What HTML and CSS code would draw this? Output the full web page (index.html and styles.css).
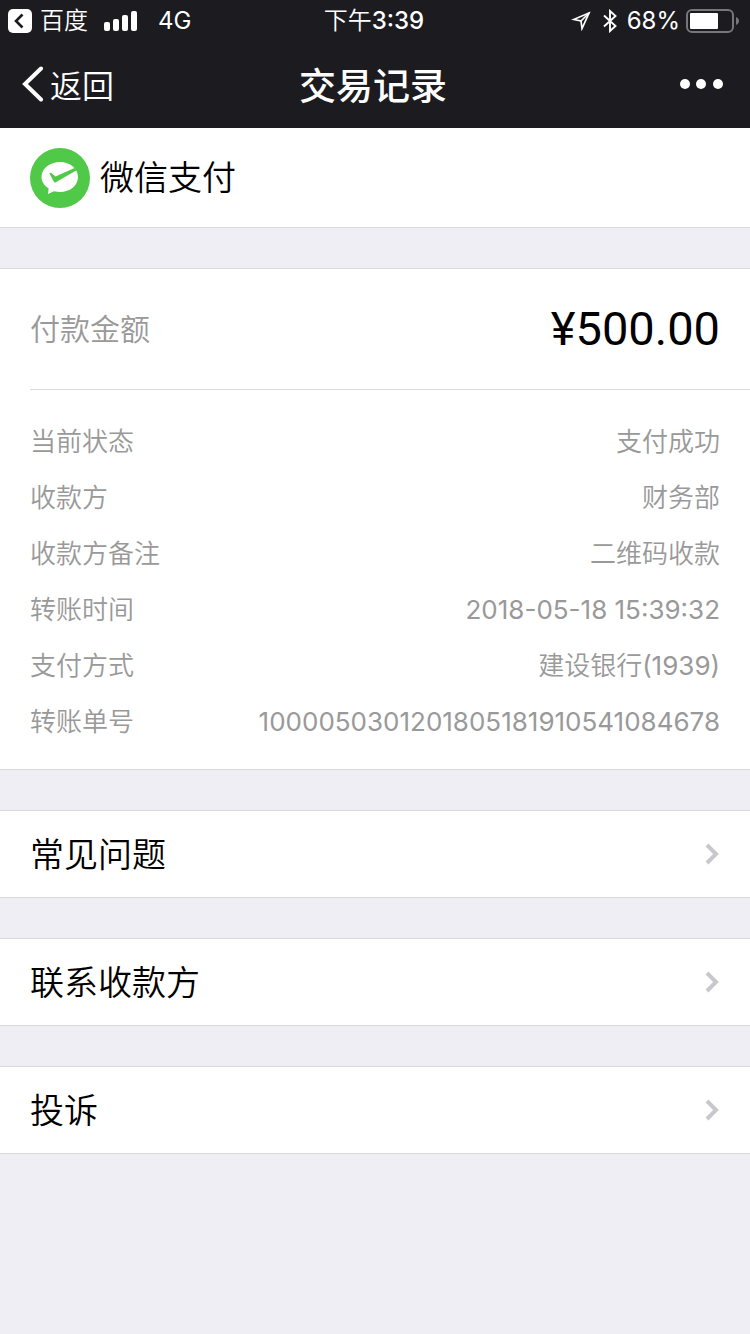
FILE: index.html
```html
<!DOCTYPE html>
<html lang="zh-CN">
<head>
    <meta charset="UTF-8">
    <meta name="viewport" content="width=device-width, initial-scale=1.0">
    <title>交易记录</title>
    <link rel="stylesheet" href="styles.css">
</head>
<body>

<!-- Top bar -->
<header class="topbar">
    <div class="status">
        <div class="status-left">
            <svg class="app-back" viewBox="0 0 24 24" aria-hidden="true">
                <rect width="24" height="24" rx="5" fill="#fff"/>
                <path d="M14.500 5.500L8 12l6.500 6.500" fill="none" stroke="#1c1b20" stroke-width="2.600"/>
            </svg>
            <span>百度</span>
            <svg class="signal" viewBox="0 0 34 20" aria-hidden="true">
                <rect x="0" y="11" width="6" height="9" rx="2"/>
                <rect x="9" y="8" width="6" height="12" rx="2"/>
                <rect x="18" y="4" width="6" height="16" rx="2"/>
                <rect x="27" y="0" width="6" height="20" rx="2"/>
            </svg>
            <span class="num">4G</span>
        </div>
        <div class="status-time">下午<span class="clock">3:39</span></div>
        <div class="status-right">
            <svg class="location" viewBox="0 0 20 20" aria-hidden="true">
                <path d="M18 2L2.500 8.500l7.500 1.500 1 7.500z" fill="none" stroke="#fff" stroke-width="1.700"/>
                <path d="M18 2L10 10" stroke="#fff" stroke-width="1.700"/>
            </svg>
            <svg class="bluetooth" viewBox="0 0 14 24" aria-hidden="true">
                <path d="M1 6.500l11.500 10.500L7 22V2l5.500 5L1 17.500" fill="none" stroke="#fff" stroke-width="1.900"/>
            </svg>
            <span class="num">68%</span>
            <svg class="battery" viewBox="0 0 54 24" aria-hidden="true">
                <rect x="1" y="1" width="46" height="22" rx="5" fill="none" stroke="#77767a" stroke-width="2"/>
                <rect x="4" y="4" width="28" height="16" rx="1" fill="#fff"/>
                <path d="M50 8c4 1.500 4 6.500 0 8z" fill="#77767a"/>
            </svg>
        </div>
    </div>
    <nav class="nav">
        <button type="button" class="back">
            <svg viewBox="0 0 22 36" aria-hidden="true">
                <path d="M19 2.500L3 18l16 15.500" fill="none" stroke="#fff" stroke-width="4" stroke-linecap="round"/>
            </svg>
            返回
        </button>
        <h1>交易记录</h1>
        <button type="button" class="more" aria-label="更多">
            <svg viewBox="0 0 44 10" aria-hidden="true">
                <circle cx="5" cy="5" r="5"/>
                <circle cx="21" cy="5" r="5"/>
                <circle cx="38" cy="5" r="5"/>
            </svg>
        </button>
    </nav>
</header>

<main>
    <section class="brand">
        <svg class="brand-logo" viewBox="0 0 60 60" aria-hidden="true">
            <circle cx="30" cy="30" r="30" fill="#50c848"/>
            <path d="M30 14c10 0 18 6.500 18 15s-8 15-18 15c-2 0-4-.3-6-.8l-6 2.800.6-5.600C14.500 37.800 11.500 33.700 11.500 29 11.500 20.500 20 14 30 14z" fill="#fff"/>
            <path d="M19.500 25.500q.5-1.200 1.800-.5L25.500 28.500 44.500 20 47 22 25.800 34.300q-1.300.6-1.900-.6z" fill="#50c848"/>
        </svg>
        <h2>微信支付</h2>
    </section>

    <!-- Payment details -->
    <section class="card">
        <div class="amount">
            <span class="amount-label">付款金额</span>
            <span class="amount-value">¥500.00</span>
        </div>
        <dl class="details">
            <div class="row"><dt>当前状态</dt><dd>支付成功</dd></div>
            <div class="row"><dt>收款方</dt><dd>财务部</dd></div>
            <div class="row"><dt>收款方备注</dt><dd>二维码收款</dd></div>
            <div class="row"><dt>转账时间</dt><dd class="num">2018-05-18 15:39:32</dd></div>
            <div class="row"><dt>支付方式</dt><dd>建设银行<span class="num">(1939)</span></dd></div>
            <div class="row"><dt>转账单号</dt><dd class="num">1000050301201805181910541084678</dd></div>
        </dl>
    </section>

    <a class="link" href="#faq">
        常见问题
        <svg class="arrow" viewBox="0 0 16 24" aria-hidden="true"><path d="M3 3l9 9-9 9"/></svg>
    </a>
    <a class="link" href="#contact">
        联系收款方
        <svg class="arrow" viewBox="0 0 16 24" aria-hidden="true"><path d="M3 3l9 9-9 9"/></svg>
    </a>
    <a class="link" href="#complaint">
        投诉
        <svg class="arrow" viewBox="0 0 16 24" aria-hidden="true"><path d="M3 3l9 9-9 9"/></svg>
    </a>
</main>

</body>
</html>
```
FILE: styles.css
```css
* {
    box-sizing: border-box;
}
body {
    font-family: Inter, "Noto Sans CJK SC", sans-serif;
    font-weight: 350;
    line-height: 1.5;
    margin: 0;
    background-color: #efeef4;
    color: #000;
}
h1, h2, dl, dd {
    margin: 0;
    font-weight: inherit;
}
svg {
    display: block;
    flex: none;
}
button {
    padding: 0;
    border: none;
    background: none;
    color: inherit;
    font: inherit;
    cursor: pointer;
}
.num {
    font-weight: 400;
}

/* Top bar */
.topbar {
    background-color: #1c1b20;
    color: #fff;
}
.status {
    display: grid;
    grid-template-columns: 1fr auto 1fr;
    align-items: center;
    height: 40px;
    padding: 2px 10px 0 8px;
    font-size: 24px;
}
.status-left, .status-right {
    display: flex;
    align-items: center;
    gap: 8px;
}
.status-right {
    justify-content: flex-end;
    gap: 6px;
}
.clock {
    font-weight: 500;
}
.app-back {
    width: 24px;
    height: 24px;
}
.signal {
    width: 34px;
    height: 20px;
    margin: 0 12px 0 8px;
    fill: #fff;
}
.location {
    width: 20px;
    height: 20px;
}
.bluetooth {
    width: 14px;
    height: 24px;
    margin: 0 4px 0 6px;
}
.battery {
    width: 54px;
    height: 24px;
}
.nav {
    display: grid;
    grid-template-columns: 1fr auto 1fr;
    align-items: center;
    height: 88px;
    padding: 0 26px 0 22px;
    line-height: normal;
}
.nav h1 {
    font-size: 37px;
    font-weight: 500;
}
.back {
    display: flex;
    align-items: center;
    gap: 6px;
    font-size: 32px;
    justify-self: start;
}
.back svg {
    width: 22px;
    height: 36px;
}
.more {
    justify-self: end;
}
.more svg {
    width: 44px;
    height: 10px;
    fill: #fff;
}

/* Sections */
.brand, .card, .link {
    background-color: #fff;
    border-bottom: 1px solid #d9d9dc;
}
.card, .link {
    margin-top: 40px;
    border-top: 1px solid #d9d9dc;
}
.brand {
    display: flex;
    align-items: center;
    gap: 10px;
    height: 100px;
    padding: 0 30px;
}
.brand-logo {
    width: 60px;
    height: 60px;
}
.brand h2 {
    font-size: 34px;
}
.card {
    padding-left: 30px;
}
.amount {
    display: flex;
    align-items: center;
    justify-content: space-between;
    height: 121px;
    padding-right: 30px;
    border-bottom: 1px solid #d9d9d9;
}
.amount-label {
    color: #999;
    font-size: 30px;
}
.amount-value {
    font-family: Roboto, sans-serif;
    font-size: 47px;
    font-weight: 400;
}
.details {
    padding: 24px 30px 19px 0;
    color: #999;
    font-size: 26px;
    line-height: 56px;
}
.row {
    display: flex;
    justify-content: space-between;
}
.link {
    display: flex;
    align-items: center;
    justify-content: space-between;
    height: 88px;
    padding: 0 30px;
    color: #000;
    font-size: 34px;
    text-decoration: none;
}
.arrow {
    width: 16px;
    height: 24px;
    fill: none;
    stroke: #c7c7cc;
    stroke-width: 4;
}
```
